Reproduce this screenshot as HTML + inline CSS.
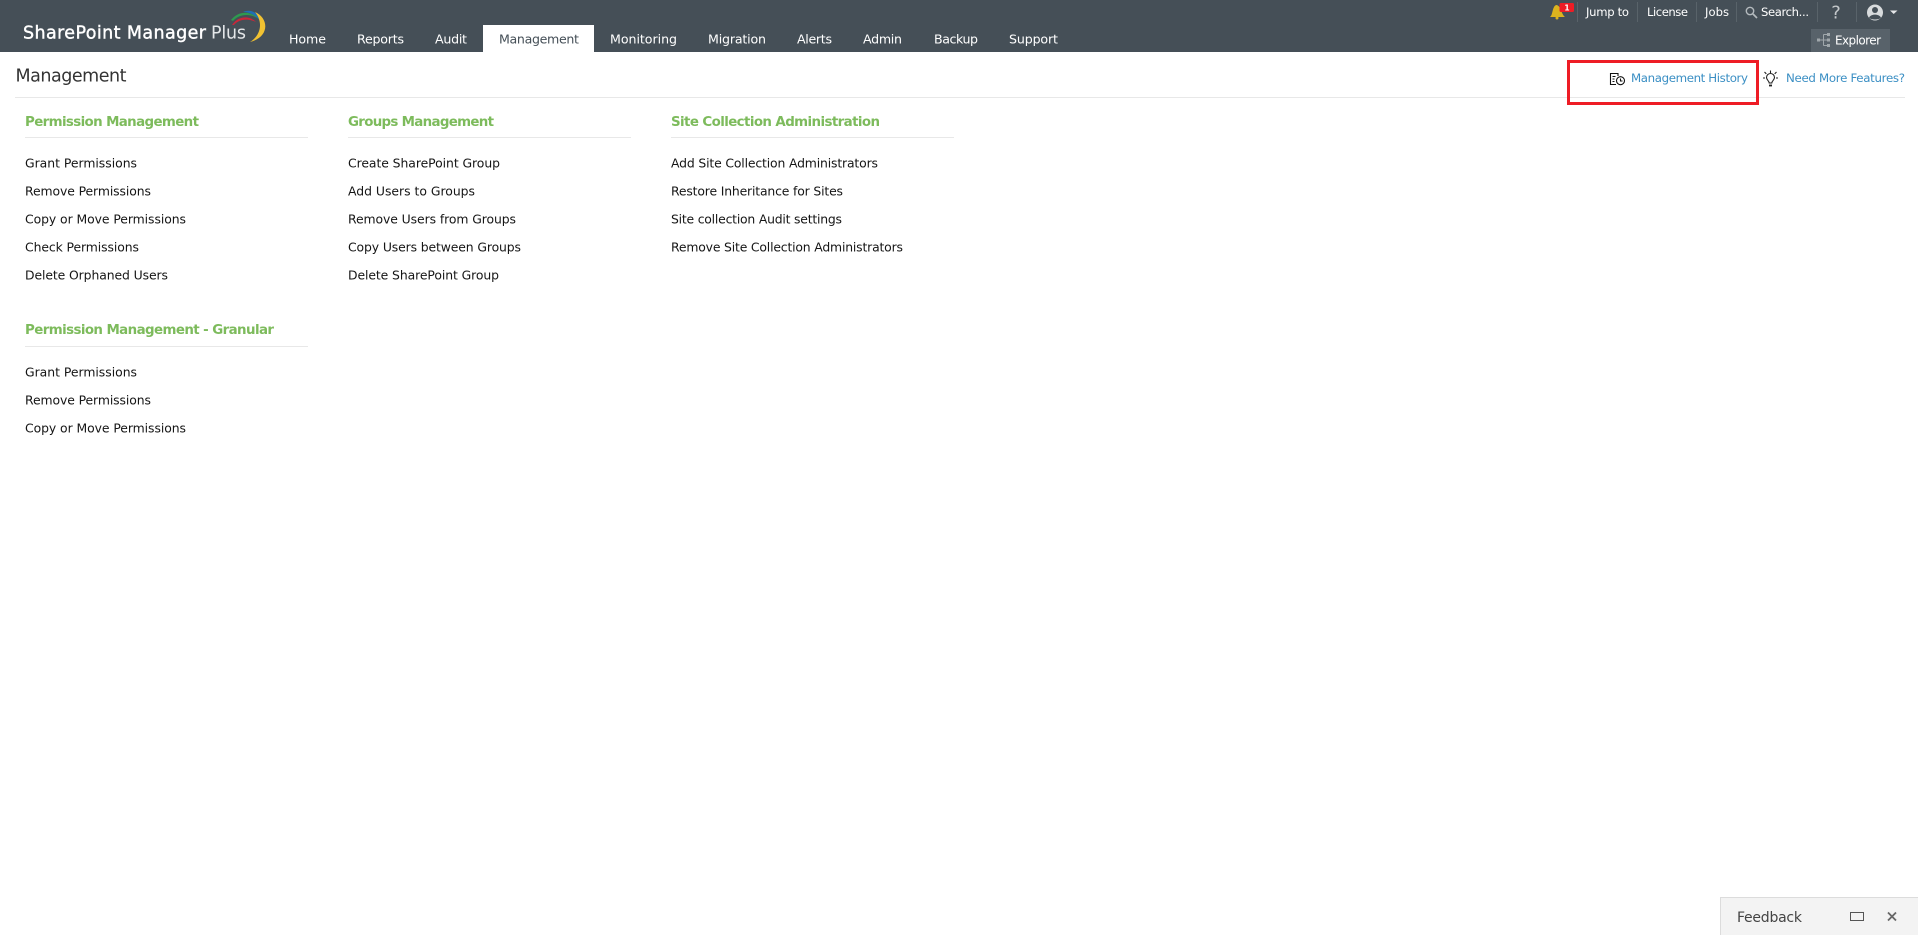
<!DOCTYPE html>
<html lang="en">
<head>
<meta charset="utf-8">
<title>SharePoint Manager Plus - Management</title>
<style>
html,body{margin:0;padding:0;width:1918px;height:935px;overflow:hidden;background:#fff}
svg{display:block}
text{font-family:"DejaVu Sans","Liberation Sans",sans-serif}
.nav{font-size:12.6px;fill:#fff}
.top{font-size:11.6px;fill:#fff}
.item{font-size:12.4px;fill:#151515}
.head{font-size:13.4px;font-weight:bold;fill:#7dbb5c}
.link{font-size:11.8px;fill:#3b8fc4}
</style>
</head>
<body>
<svg width="1918" height="935" viewBox="0 0 1918 935" xmlns="http://www.w3.org/2000/svg">
<rect width="1918" height="52" fill="#454f57"/>

<!-- logo -->
<text x="23" y="38.500" font-size="17.500" fill="#fff" stroke="#fff" stroke-width=".4" textLength="183" lengthAdjust="spacing">SharePoint Manager</text>
<text x="211" y="38.500" font-size="17.500" fill="#e4e7e9" textLength="35" lengthAdjust="spacing">Plus</text>
<path d="M231 20C238 11 250 10 259 19C250 13 239 14 233 21Z" fill="#2e9a4f"/>
<path d="M232 25C238 16 249 15 256 22C248 18 239 19 234 25Z" fill="#c8273a"/>
<path d="M243 12C252 8 261 14 263 27C260 18 252 12 243 12Z" fill="#1f6fb5"/>
<path d="M255 12C269 18 270 37 250 42C260 36 264 23 255 12Z" fill="#f1c232"/>

<!-- tabs -->
<rect x="483" y="25" width="111" height="27" fill="#fff"/>
<text class="nav" x="289" y="43.500" textLength="37">Home</text>
<text class="nav" x="357" y="43.500" textLength="47">Reports</text>
<text class="nav" x="435" y="43.500" textLength="32">Audit</text>
<text class="nav" x="499" y="43.500" textLength="80" style="fill:#454f57">Management</text>
<text class="nav" x="610" y="43.500" textLength="67">Monitoring</text>
<text class="nav" x="708" y="43.500" textLength="58">Migration</text>
<text class="nav" x="797" y="43.500" textLength="35">Alerts</text>
<text class="nav" x="863" y="43.500" textLength="39">Admin</text>
<text class="nav" x="934" y="43.500" textLength="44">Backup</text>
<text class="nav" x="1009" y="43.500" textLength="49">Support</text>

<!-- top utility bar -->
<path d="M1550 17C1553 15 1552 7 1556 5C1561 5 1561 14 1565 17Z" fill="#dcb41e"/>
<circle cx="1557" cy="18" r="1.500" fill="#dcb41e"/>
<rect x="1559.500" y="3" width="14.500" height="9" rx="1.500" fill="#ee1c25"/>
<text x="1567" y="10.500" font-size="7.500" font-weight="bold" fill="#fff" text-anchor="middle">1</text>
<path d="M1577.500 2V22M1637.500 2V22M1696.500 2V22M1736.500 2V22M1817.500 2V22M1856.500 2V22" stroke="#59636a" stroke-width="1"/>
<text class="top" x="1586" y="16" textLength="43">Jump to</text>
<text class="top" x="1647" y="16" textLength="41">License</text>
<text class="top" x="1705" y="16" textLength="24">Jobs</text>
<circle cx="1750" cy="11" r="3.700" fill="none" stroke="#b4babe" stroke-width="1.400"/>
<path d="M1753 14L1757 18" stroke="#b4babe" stroke-width="1.700"/>
<text class="top" x="1761" y="16" textLength="48">Search...</text>
<text x="1836" y="18.500" font-size="18" fill="#c4c8cb" text-anchor="middle">?</text>
<circle cx="1875" cy="12.500" r="8" fill="#d8dbdd"/>
<circle cx="1875" cy="10" r="3" fill="#454f57"/>
<path d="M1869 18C1870 13.500 1880 13.500 1881 18C1878 20 1872 20 1869 18Z" fill="#454f57"/>
<path d="M1890 10.500H1897.500L1893.700 14Z" fill="#e6e8ea"/>

<!-- explorer -->
<rect x="1811" y="29" width="79" height="23" fill="#58626a"/>
<path d="M1819 40H1827M1823.500 34.500V45.500M1823.500 34.500H1827M1823.500 45.500H1827" fill="none" stroke="#a0a7ab" stroke-width="1"/>
<rect x="1817" y="38.500" width="3" height="3" fill="#a0a7ab"/>
<rect x="1827" y="33" width="3" height="3" fill="#a0a7ab"/>
<rect x="1827" y="38.500" width="3" height="3" fill="#a0a7ab"/>
<rect x="1827" y="44" width="3" height="3" fill="#a0a7ab"/>
<text class="top" x="1835" y="44.500" textLength="46" style="font-size:12px">Explorer</text>

<!-- page title -->
<text x="15.500" y="81.500" font-size="17.500" fill="#333" textLength="111" lengthAdjust="spacing">Management</text>
<rect x="15" y="97" width="1890" height="1" fill="#e8e8e8"/>

<!-- highlight and links -->
<rect x="1568.500" y="61.500" width="189" height="42" fill="none" stroke="#ee1c25" stroke-width="3"/>
<g fill="none" stroke="#111" stroke-width="1.100">
<path d="M1616 84.500H1610.500V73.500H1618V76"/>
<path d="M1612.500 76.500H1615.500M1612.500 79H1614.500M1612.500 81.500H1614.500"/>
<circle cx="1620.500" cy="80.700" r="4"/>
<path d="M1620.500 78.500V81H1622.500"/>
</g>
<text class="link" x="1631" y="82" textLength="117">Management History</text>
<g fill="none" stroke="#222" stroke-width="1.100">
<path d="M1769.200 83C1769.200 81 1766.500 80 1766.500 77.500A4 4 0 0 1 1774.500 77.500C1774.500 80 1771.800 81 1771.800 83Z"/>
<path d="M1769 85.500H1772" stroke-width="1.800"/>
<path d="M1770.500 73V70.500M1764.500 72L1766.300 73.800M1776.500 72L1774.700 73.800M1763 78H1765M1778 78H1776"/>
</g>
<text class="link" x="1786" y="82" textLength="119">Need More Features?</text>

<!-- column 1 -->
<text class="head" x="25" y="126" textLength="174">Permission Management</text>
<rect x="25" y="137" width="283" height="1" fill="#e8e8e8"/>
<text class="item" x="25" y="167.500" textLength="112">Grant Permissions</text>
<text class="item" x="25" y="195.500" textLength="126">Remove Permissions</text>
<text class="item" x="25" y="223.500" textLength="161">Copy or Move Permissions</text>
<text class="item" x="25" y="251.500" textLength="114">Check Permissions</text>
<text class="item" x="25" y="279.500" textLength="143">Delete Orphaned Users</text>

<text class="head" x="25" y="334" textLength="249">Permission Management - Granular</text>
<rect x="25" y="346" width="283" height="1" fill="#e8e8e8"/>
<text class="item" x="25" y="376.500" textLength="112">Grant Permissions</text>
<text class="item" x="25" y="404.500" textLength="126">Remove Permissions</text>
<text class="item" x="25" y="432.500" textLength="161">Copy or Move Permissions</text>

<!-- column 2 -->
<text class="head" x="348" y="126" textLength="146">Groups Management</text>
<rect x="348" y="137" width="283" height="1" fill="#e8e8e8"/>
<text class="item" x="348" y="167.500" textLength="152">Create SharePoint Group</text>
<text class="item" x="348" y="195.500" textLength="127">Add Users to Groups</text>
<text class="item" x="348" y="223.500" textLength="168">Remove Users from Groups</text>
<text class="item" x="348" y="251.500" textLength="173">Copy Users between Groups</text>
<text class="item" x="348" y="279.500" textLength="151">Delete SharePoint Group</text>

<!-- column 3 -->
<text class="head" x="671" y="126" textLength="209">Site Collection Administration</text>
<rect x="671" y="137" width="283" height="1" fill="#e8e8e8"/>
<text class="item" x="671" y="167.500" textLength="207">Add Site Collection Administrators</text>
<text class="item" x="671" y="195.500" textLength="172">Restore Inheritance for Sites</text>
<text class="item" x="671" y="223.500" textLength="171">Site collection Audit settings</text>
<text class="item" x="671" y="251.500" textLength="232">Remove Site Collection Administrators</text>

<!-- feedback -->
<rect x="1720.500" y="897.500" width="200" height="40" fill="#f3f3f3" stroke="#dcdcdc"/>
<text x="1737" y="922" font-size="14" fill="#444" textLength="65" lengthAdjust="spacing">Feedback</text>
<rect x="1850.500" y="912.500" width="13" height="8" fill="none" stroke="#555" stroke-width="1"/>
<path d="M1888 912.500L1896 920.500M1896 912.500L1888 920.500" stroke="#666" stroke-width="1.800"/>
</svg>
</body>
</html>
